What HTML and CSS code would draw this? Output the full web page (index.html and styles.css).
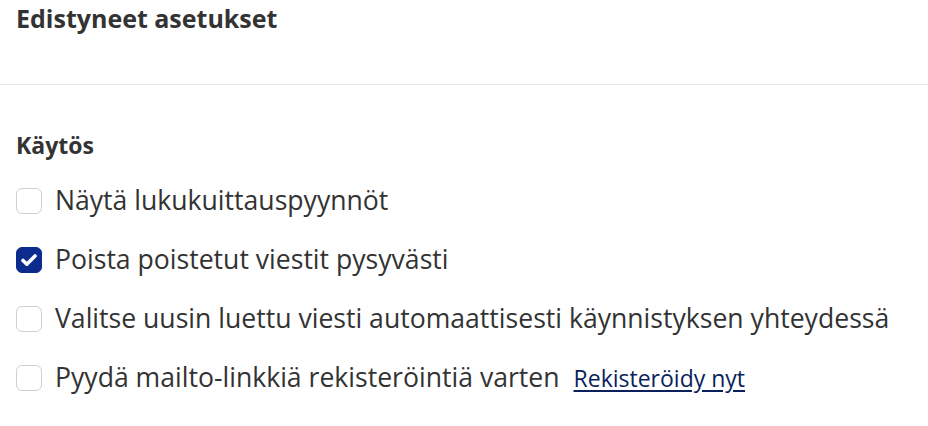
FILE: index.html
```html
<!DOCTYPE html>
<html lang="fi">
<head>
<meta charset="utf-8">
<link rel="stylesheet" href="styles.css">
</head>
<body>
<div class="page">
  <header class="head">
    <h1 class="title">Edistyneet asetukset</h1>
  </header>
  <section class="section">
    <h2 class="section-title">Käytös</h2>
    <ul class="options">
      <li class="option"><span class="box"></span><span class="label">Näytä lukukuittauspyynnöt</span></li>
      <li class="option"><span class="box checked"><svg viewBox="0 0 26 26" width="26" height="26"><path d="M7 13.5 L10.8 17.2 L19 9" fill="none" stroke="#fff" stroke-width="3.6" stroke-linecap="round" stroke-linejoin="round"/></svg></span><span class="label">Poista poistetut viestit pysyvästi</span></li>
      <li class="option"><span class="box"></span><span class="label">Valitse uusin luettu viesti automaattisesti käynnistyksen yhteydessä</span></li>
      <li class="option"><span class="box"></span><span class="label">Pyydä mailto-linkkiä rekisteröintiä varten</span><a class="link" href="#">Rekisteröidy nyt</a></li>
    </ul>
  </section>
</div>
</body>
</html>
```
FILE: styles.css
```css
* { box-sizing: border-box; }
html, body { margin: 0; padding: 0; background: #fff; }
body { font-family: "Open Sans", "Noto Sans", sans-serif; color: #333; }
.page { width: 928px; }
.head { padding: 2px 16px 0; height: 85px; border-bottom: 1px solid #e6e6e6; }
.title { margin: 0; font-size: 25px; font-weight: 700; line-height: 32px; color: #333; }
.section { padding: 44px 16px 0; }
.section-title { margin: 0; font-size: 23px; font-weight: 700; line-height: 32px; color: #333; }
.options { list-style: none; margin: 23px 0 0; padding: 0; display: flex; flex-direction: column; gap: 26px; }
.option { display: flex; align-items: center; height: 33px; gap: 13px; }
.box { width: 26px; height: 26px; border: 1px solid #cfcfcf; border-radius: 6px; flex: none; display: flex; background: #fff; }
.box.checked { background: #0b2c8c; border-color: #0b2c8c; }
.box svg { display: block; margin: -1px; }
.label { font-size: 26.6px; line-height: 33px; color: #333; white-space: nowrap; }
.link { margin-left: 1px; font-size: 23px; color: #0a1f5c; text-decoration: underline; text-underline-offset: 3px; }
```
